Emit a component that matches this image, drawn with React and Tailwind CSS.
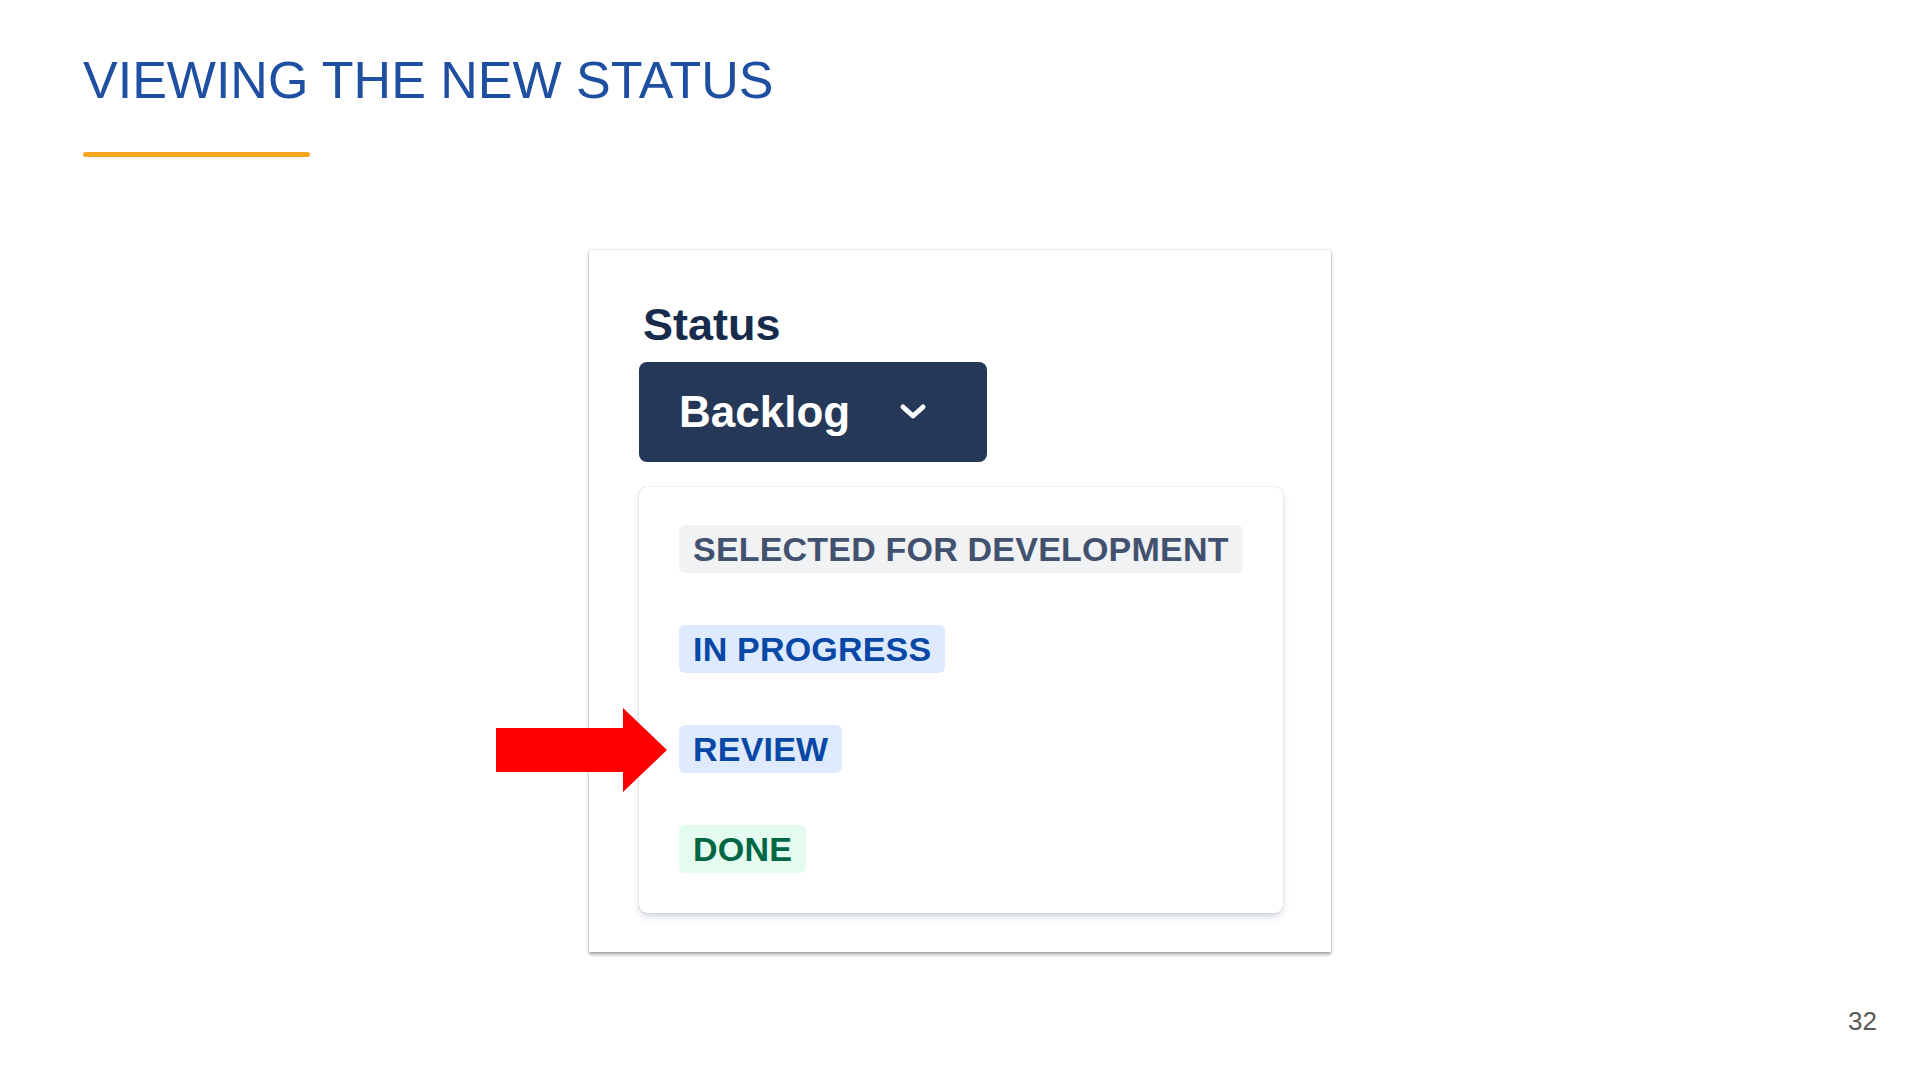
import React from 'react'

const statuses = [
  { label: 'SELECTED FOR DEVELOPMENT', cls: 'bg-[#f1f2f4] text-[#42526e]' },
  { label: 'IN PROGRESS', cls: 'bg-[#deebff] text-[#0747a6]' },
  { label: 'REVIEW', cls: 'bg-[#deebff] text-[#0747a6]' },
  { label: 'DONE', cls: 'bg-[#e3fcef] text-[#006644]' },
]

const Chevron = () => (
  <svg width="28" height="18" viewBox="0 0 28 18" fill="none">
    <path d="M4 4 L14 13 L24 4" stroke="white" strokeWidth="5" strokeLinecap="round" strokeLinejoin="round" />
  </svg>
)

const Arrow = () => (
  <svg
    className="absolute left-[-93px] top-[458px]"
    width="172"
    height="86"
    viewBox="0 0 172 86"
  >
    <polygon points="0,20 127,20 127,0 171,42 127,84 127,64 0,64" fill="#ff0000" />
  </svg>
)

export default function App() {
  return (
    <div
      className="w-[1920px] h-[1080px] bg-white flex flex-col"
      style={{ fontFamily: '"Liberation Sans", Arial, sans-serif' }}
    >
      <div className="pl-[83px] pt-[54px]">
        <h1 className="text-[52px] leading-none font-normal text-[#1f4fa0]">
          VIEWING THE NEW STATUS
        </h1>
        <div className="mt-[46px] w-[227px] h-[5px] rounded-full bg-[#f5a623]" />
      </div>

      <div className="relative mx-auto mt-[93px] w-[742px] h-[702px] bg-white px-[50px] pt-[48px] shadow-[0_0_2px_rgba(0,0,0,0.25),0_3px_3px_rgba(0,0,0,0.28)]">
        <div className="ml-[4px] text-[45px] leading-[1.2] font-bold text-[#172b4d]">Status</div>
        <div className="mt-[10px] w-[348px] h-[100px] rounded-[8px] bg-[#253858] flex items-center pl-[40px]">
          <span className="text-[44px] leading-[1.2] font-bold text-white">Backlog</span>
          <span className="ml-[49px] flex items-center">
            <Chevron />
          </span>
        </div>

        <div className="mt-[25px] w-[644px] h-[426px] rounded-[8px] bg-white pl-[40px] pt-[38px] flex flex-col gap-[52px] shadow-[0_4px_8px_-2px_rgba(9,30,66,0.25),0_0_1px_rgba(9,30,66,0.35)]">
          {statuses.map((s) => (
            <div key={s.label} className="flex">
              <span
                className={`h-[48px] px-[14px] rounded-[6px] flex items-center text-[34px] leading-none font-bold tracking-[0.2px] ${s.cls}`}
              >
                {s.label}
              </span>
            </div>
          ))}
        </div>

        <Arrow />
      </div>

      <div className="mt-auto flex justify-end pr-[43px] pb-[46px]">
        <span className="text-[26px] leading-none text-[#595959]">32</span>
      </div>
    </div>
  )
}
